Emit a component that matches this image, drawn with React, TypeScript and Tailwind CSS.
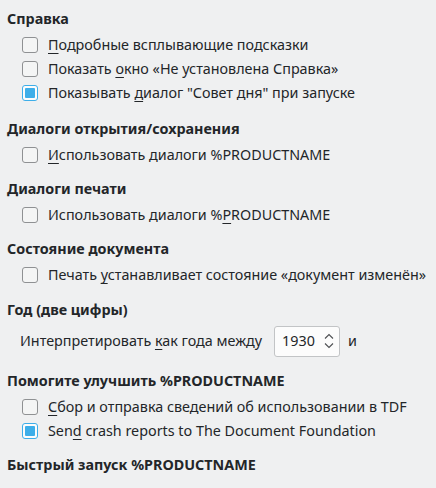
import React from "react";

const U = ({ children }: { children: React.ReactNode }) => (
  <span className="underline underline-offset-[3px] decoration-1">{children}</span>
);

const Box = ({ checked }: { checked?: boolean }) =>
  checked ? (
    <span className="w-4 h-4 rounded-[3px] border border-[#3daee9] bg-[#fcfcfc] flex items-center justify-center shrink-0">
      <span className="w-[10px] h-[10px] rounded-[1px] bg-[#3daee9]" />
    </span>
  ) : (
    <span className="w-4 h-4 rounded-[3px] border border-[#8f9193] bg-[#f4f5f5] shrink-0" />
  );

const Row = ({ checked, children }: { checked?: boolean; children: React.ReactNode }) => (
  <div className="flex items-center h-6 pl-[22px] gap-[10px]">
    <Box checked={checked} />
    <span className="whitespace-nowrap">{children}</span>
  </div>
);

const Heading = ({ children }: { children: React.ReactNode }) => (
  <div className="font-bold h-6 flex items-center pl-[7px]">{children}</div>
);

export default function App() {
  return (
    <div
      className="w-[436px] h-[488px] bg-[#eff0f1] text-[#232629] text-[14.35px] overflow-hidden pt-[7px]"
      style={{ fontFamily: '"Noto Sans", sans-serif' }}
    >
      <Heading>Справка</Heading>
      <div className="pt-[2px]">
        <Row>
          <U>П</U>одробные всплывающие подсказки
        </Row>
        <Row>
          Показать <U>о</U>кно «Не установлена Справка»
        </Row>
        <Row checked>
          Показывать <U>д</U>иалог "Совет дня" при запуске
        </Row>
      </div>
      <div className="mt-[12px]">
        <Heading>Диалоги открытия/сохранения</Heading>
        <div className="pt-[2px]">
          <Row>
            <U>И</U>спользовать диалоги %PRODUCTNAME
          </Row>
        </div>
      </div>
      <div className="mt-[10px]">
        <Heading>Диалоги печати</Heading>
        <div className="pt-[2px]">
          <Row>
            Использовать диалоги %<U>P</U>RODUCTNAME
          </Row>
        </div>
      </div>
      <div className="mt-[10px]">
        <Heading>Состояние документа</Heading>
        <div className="pt-[2px]">
          <Row>
            Печать <U>у</U>станавливает состояние «документ изменён»
          </Row>
        </div>
      </div>
      <div className="mt-[11px]">
        <Heading>Год (две цифры)</Heading>
        <div className="flex items-center pl-[20px] mt-[3px] h-[32px]">
          <span className="whitespace-nowrap">
            Интерпретировать <U>к</U>ак года между
          </span>
          <div className="ml-[12px] w-[66px] h-[31px] rounded-[3px] border border-[#c2c4c6] bg-[#fcfcfc] flex items-center pl-[7px] pr-[4px]">
            <span className="flex-1">1930</span>
            <svg width="12" height="20" viewBox="0 0 12 20" fill="none" stroke="#4d4f52" strokeWidth="1.1">
              <path d="M2 7.5 L6 3.5 L10 7.5" />
              <path d="M2 12.5 L6 16.5 L10 12.5" />
            </svg>
          </div>
          <span className="ml-[8px]">и</span>
        </div>
      </div>
      <div className="mt-[12px]">
        <Heading>Помогите улучшить %PRODUCTNAME</Heading>
        <div className="pt-[2px]">
          <Row>
            <U>С</U>бор и отправка сведений об использовании в TDF
          </Row>
          <Row checked>
            Sen<U>d</U> crash reports to The Document Foundation
          </Row>
        </div>
      </div>
      <div className="mt-[10px]">
        <Heading>Быстрый запуск %PRODUCTNAME</Heading>
      </div>
    </div>
  );
}
